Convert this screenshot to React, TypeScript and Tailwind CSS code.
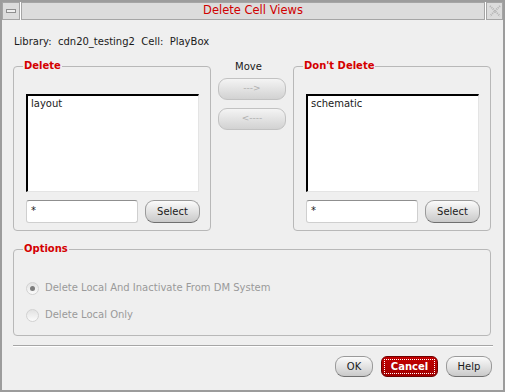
import React from 'react'

const font = { fontFamily: '"DejaVu Sans", sans-serif' }

const GroupBox = ({ label, className, children }: { label: string; className: string; children?: React.ReactNode }) => (
  <div className={`relative border border-[#b8b8b8] rounded-[4px] ${className}`}>
    <span className="absolute -top-[8px] left-[9px] px-px bg-[#efefef] text-[10px] leading-[14px] font-bold text-[#d40000]">
      {label}
    </span>
    {children}
  </div>
)

const ListPanel = ({ label, item }: { label: string; item: string }) => (
  <GroupBox label={label} className="w-[198px] h-[165px] pt-[27px] pl-[12px]">
    <div className="w-[173px] h-[98px] bg-white border-t-2 border-l-2 border-r border-b border-t-black border-l-black border-r-[#e4e4e4] border-b-[#e4e4e4] pl-[3px] pt-[1px] text-[10px] leading-[14px] text-[#1a1a1a]">
      {item}
    </div>
    <div className="flex gap-[7px] mt-[8px]">
      <div className="w-[112px] h-[23px] bg-white border border-[#cfcfcf] border-t-[#8f8f8f] rounded-[3px] pl-[4px] pt-[4px] text-[10px] leading-[12px] text-[#1a1a1a]">
        *
      </div>
      <button className="w-[55px] h-[23px] rounded-[9px] border border-[#9a9a9a] border-b-[#6f6f6f] bg-gradient-to-b from-[#fbfbfb] to-[#c9c9c9] text-[10px] text-[#1a1a1a]">
        Select
      </button>
    </div>
  </GroupBox>
)

const Radio = ({ checked, label }: { checked?: boolean; label: string }) => (
  <div className="flex items-center h-[14px]">
    <div className="w-[13px] h-[13px] rounded-full border border-[#d2d2d2] bg-gradient-to-b from-[#e2e2e2] to-[#fbfbfb] flex items-center justify-center">
      {checked && <div className="w-[5px] h-[5px] rounded-full bg-[#7d7d7d]" />}
    </div>
    <span className="ml-[6px] text-[10px] leading-[14px] text-[#9a9a9a]">{label}</span>
  </div>
)

export default function App() {
  return (
    <div style={font} className="w-[505px] h-[392px] bg-[#efefef] border-2 border-[#9c9c9c] flex flex-col">
      {/* title bar */}
      <div className="flex h-[18px] gap-px bg-white">
        <div className="w-[18px] border border-[#a5a5a5] bg-[#dcdcdc] flex items-center justify-center">
          <div className="w-[10px] h-[4px] border border-[#8f8f8f] bg-[#efefef]" />
        </div>
        <div className="flex-1 border border-[#a5a5a5] bg-[#dcdcdc] flex items-center justify-center text-[11.5px] text-[#d00000]">
          Delete Cell Views
        </div>
        <div className="w-[17px] border border-[#a5a5a5] bg-[#dcdcdc] flex items-center justify-center">
          <svg width="12" height="12" viewBox="0 0 12 12">
            <path d="M1 1 L11 11 M11 1 L1 11" stroke="#b4b4b4" strokeWidth="2" strokeDasharray="1 1" fill="none" />
          </svg>
        </div>
      </div>

      <div className="px-[11px]">
        <div className="mt-[16px] text-[10px] leading-[12px] text-[#1a1a1a] ml-px whitespace-pre">
          Library:  cdn20_testing2  Cell:  PlayBox
        </div>

        <div className="w-[478px] flex mt-[18px]">
          <ListPanel label="Delete" item="layout" />
          <div className="flex-1 flex flex-col items-center">
            <div className="mt-[-6px] mr-[7px] text-[10px] leading-[14px] text-[#1a1a1a]">Move</div>
            <div className="mt-[4px] flex flex-col gap-[8px]">
              <button className="w-[68px] h-[22px] rounded-[9px] border border-[#c2c2c2] bg-gradient-to-b from-[#f4f4f4] to-[#d2d2d2] text-[9px] text-[#b0b0b0]">
                ---&gt;
              </button>
              <button className="w-[68px] h-[22px] rounded-[9px] border border-[#c2c2c2] bg-gradient-to-b from-[#f4f4f4] to-[#d2d2d2] text-[9px] text-[#b0b0b0]">
                &lt;----
              </button>
            </div>
          </div>
          <ListPanel label="Don't Delete" item="schematic" />
        </div>

        <GroupBox label="Options" className="mt-[18px] w-[478px] h-[87px] pl-[12px] pt-[31px]">
          <div className="flex flex-col gap-[13px]">
            <Radio checked label="Delete Local And Inactivate From DM System" />
            <Radio label="Delete Local Only" />
          </div>
        </GroupBox>

        <div className="mt-[9px] w-[480px] h-[2px] border-t border-[#a6a6a6] bg-white" />

        <div className="mt-[9px] w-[479px] flex justify-end text-[10px]">
          <button className="w-[38px] h-[21px] rounded-[9px] border border-[#9a9a9a] border-b-[#6f6f6f] bg-gradient-to-b from-[#fbfbfb] to-[#cacaca] text-[#1a1a1a]">
            OK
          </button>
          <button className="ml-[8px] w-[57px] h-[21px] rounded-[6px] border border-[#6e0000] bg-gradient-to-b from-[#c40000] to-[#a00000] p-[2px]">
            <div className="w-full h-full border border-dotted border-white flex items-center justify-center font-bold text-white">
              Cancel
            </div>
          </button>
          <button className="ml-[8px] w-[46px] h-[21px] rounded-[9px] border border-[#9a9a9a] border-b-[#6f6f6f] bg-gradient-to-b from-[#fbfbfb] to-[#cacaca] text-[#1a1a1a]">
            Help
          </button>
        </div>
      </div>
    </div>
  )
}
